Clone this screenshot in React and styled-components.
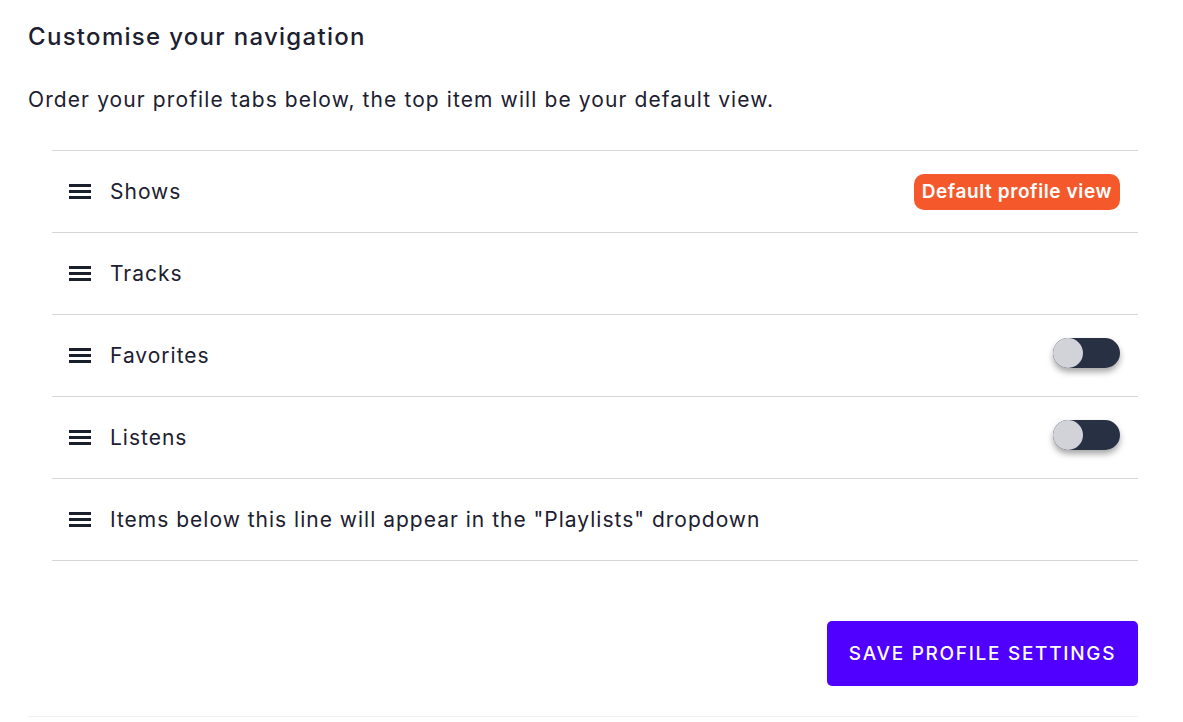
import React from "react"
import styled, { createGlobalStyle } from "styled-components"

const GlobalStyle = createGlobalStyle`
    body {
        margin: 0;
        background: #ffffff;
        font-family: "Inter", "Liberation Sans", sans-serif;
        color: #1c2030;
    }
`

const Page = styled.div`
    width: 1110px;
    padding: 0 0 0 28px;
`

const Section = styled.section`
    border-bottom: 1px solid #f0f0f2;
    padding-bottom: 30px;
`

const Heading = styled.h2`
    margin: 0;
    padding-top: 22px;
    font-size: 24px;
    font-weight: 500;
    line-height: 30px;
    letter-spacing: 1.3px;
`

const Intro = styled.p`
    margin: 0;
    padding-top: 34px;
    font-size: 21px;
    line-height: 28px;
    letter-spacing: 1.1px;
`

const List = styled.ul`
    list-style: none;
    margin: 36px 0 0 24px;
    padding: 0;
    border-top: 1px solid #d6d6d8;
`

const Row = styled.li`
    display: flex;
    align-items: center;
    height: 81px;
    padding: 0 18px 0 17px;
    border-bottom: 1px solid #d6d6d8;
    font-size: 21px;
    letter-spacing: 1px;
`

const Label = styled.span`
    flex: 1;
    margin-left: 19px;
`

const Badge = styled.span`
    background: #f5592b;
    color: #ffffff;
    font-weight: 600;
    font-size: 19px;
    line-height: 36px;
    letter-spacing: 0.6px;
    padding: 0 8px;
    border-radius: 10px;
`

const Track = styled.span`
    position: relative;
    display: block;
    width: 67px;
    height: 30px;
    margin-bottom: 6px;
    border-radius: 15px;
    background: #283044;
    box-shadow: 0 4px 6px rgba(0, 0, 0, 0.35);
`

const Knob = styled.span`
    position: absolute;
    left: 0;
    top: 0;
    width: 30px;
    height: 30px;
    border-radius: 50%;
    background: #d2d3d8;
`

const Actions = styled.div`
    display: flex;
    justify-content: flex-end;
    padding-top: 60px;
`

const SaveButton = styled.button`
    width: 311px;
    height: 65px;
    border: 0;
    border-radius: 5px;
    background: #5000ff;
    color: #ffffff;
    font-family: inherit;
    font-size: 19px;
    font-weight: 500;
    letter-spacing: 1.7px;
    text-transform: uppercase;
`

const Handle = () => (
    <svg width="22" height="15" viewBox="0 0 22 15">
        <rect x="0" y="0" width="22" height="3" fill="#1a1f2c" />
        <rect x="0" y="6" width="22" height="3" fill="#1a1f2c" />
        <rect x="0" y="12" width="22" height="3" fill="#1a1f2c" />
    </svg>
)

const Toggle = () => (
    <Track>
        <Knob />
    </Track>
)

const tabs = [
    { name: "Shows", extra: <Badge>Default profile view</Badge> },
    { name: "Tracks" },
    { name: "Favorites", extra: <Toggle /> },
    { name: "Listens", extra: <Toggle /> },
    { name: "Items below this line will appear in the \"Playlists\" dropdown" },
]

export default () => (
    <Page>
        <GlobalStyle />
        <Section>
            <Heading>Customise your navigation</Heading>
            <Intro>Order your profile tabs below, the top item will be your default view.</Intro>
            <List>
                {tabs.map(tab => (
                    <Row key={tab.name}>
                        <Handle />
                        <Label>{tab.name}</Label>
                        {tab.extra}
                    </Row>
                ))}
            </List>
            <Actions>
                <SaveButton>Save profile settings</SaveButton>
            </Actions>
        </Section>
    </Page>
)
